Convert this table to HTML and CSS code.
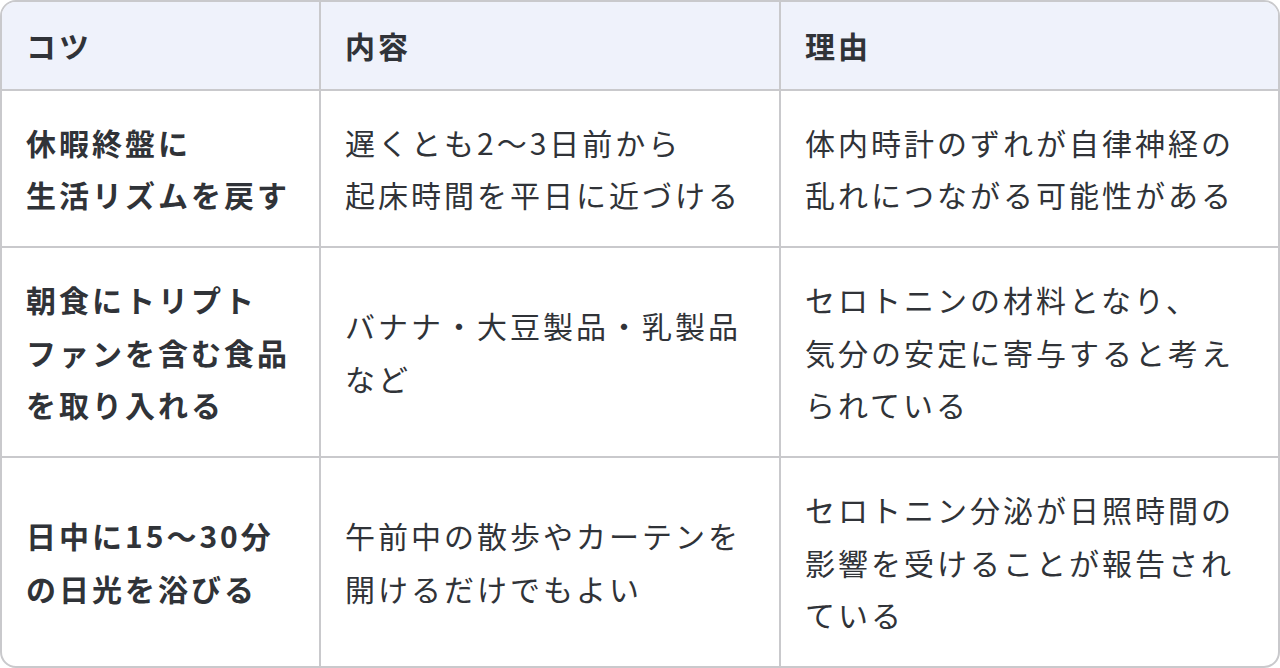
FILE: index.html
```html
<!DOCTYPE html>
<html lang="ja">
<head>
<meta charset="utf-8">
<link rel="stylesheet" href="styles.css">
</head>
<body>
<div class="wrap">
<table class="tips">
  <thead>
    <tr><th class="c1">コツ</th><th class="c2">内容</th><th class="c3">理由</th></tr>
  </thead>
  <tbody>
    <tr>
      <td class="key">休暇終盤に<br>生活リズムを戻す</td>
      <td>遅くとも2〜3日前から<br>起床時間を平日に近づける</td>
      <td>体内時計のずれが自律神経の<br>乱れにつながる可能性がある</td>
    </tr>
    <tr>
      <td class="key">朝食にトリプト<br>ファンを含む食品<br>を取り入れる</td>
      <td>バナナ・大豆製品・乳製品<br>など</td>
      <td>セロトニンの材料となり、<br>気分の安定に寄与すると考え<br>られている</td>
    </tr>
    <tr>
      <td class="key">日中に15〜30分<br>の日光を浴びる</td>
      <td>午前中の散歩やカーテンを<br>開けるだけでもよい</td>
      <td>セロトニン分泌が日照時間の<br>影響を受けることが報告され<br>ている</td>
    </tr>
  </tbody>
</table>
</div>
</body>
</html>
```

FILE: styles.css
```css
html, body {
  margin: 0;
  padding: 0;
  background: #ffffff;
}
.wrap {
  width: 1280px;
  height: 668px;
  box-sizing: border-box;
}
.tips {
  width: 1280px;
  border-collapse: separate;
  border-spacing: 0;
  border: 2px solid #c9c9cc;
  border-radius: 16px;
  overflow: hidden;
  font-family: "Noto Sans CJK JP", "Noto Sans", sans-serif;
  font-size: 30px;
  line-height: 1.75;
  letter-spacing: 3px;
  color: #303338;
  table-layout: fixed;
}
.c1 { width: 317px; }
.c2 { width: 460px; }
.c3 { width: auto; }
th, td {
  box-sizing: border-box;
  text-align: left;
  vertical-align: middle;
  white-space: nowrap;
  padding: 25px 24px 25.5px 24px;
  border-left: 2px solid #c9c9cc;
  border-top: 2px solid #c9c9cc;
}
th {
  background: #eff2fb;
  font-weight: 700;
  padding-top: 17px;
  padding-bottom: 17px;
  border-top: none;
}
th:first-child, td:first-child {
  border-left: none;
}
td.key {
  font-weight: 700;
}
```
